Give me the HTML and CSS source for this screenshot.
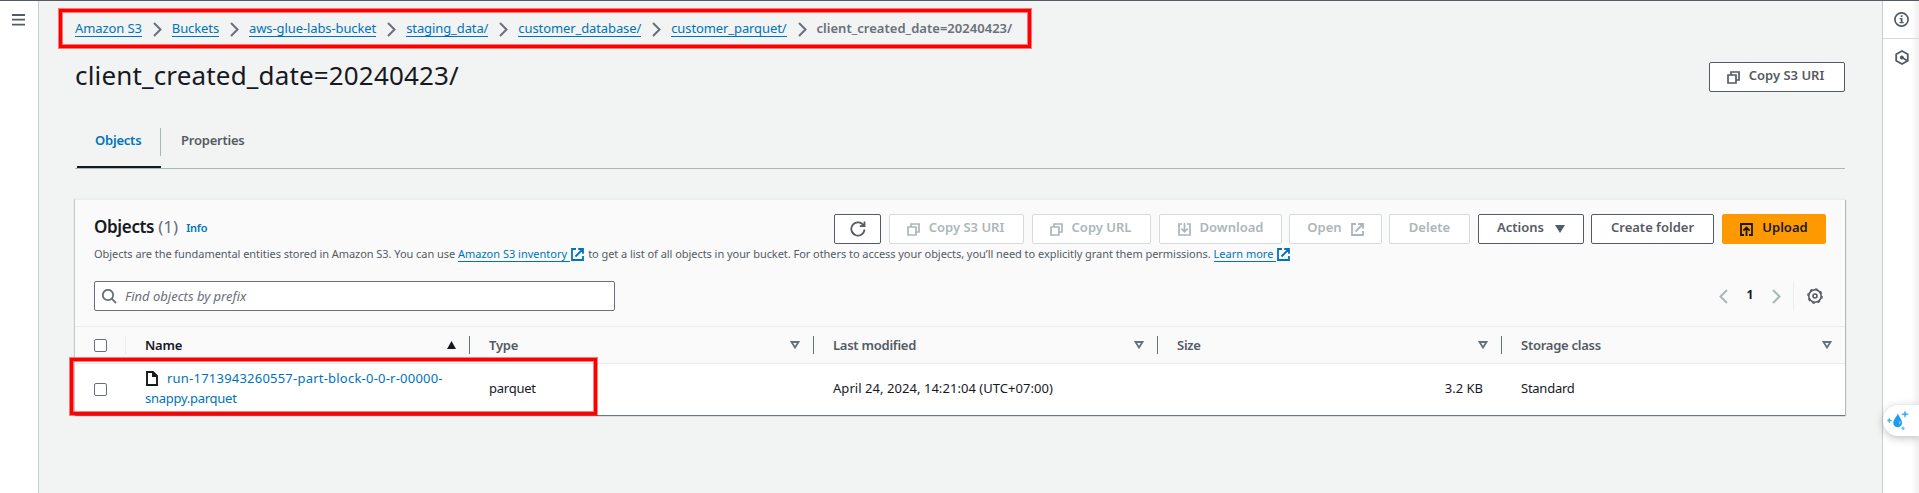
FILE: index.html
```html
<!DOCTYPE html>
<html lang="en">
<head>
<meta charset="utf-8">
<title>client_created_date=20240423/ - S3 bucket</title>
<link rel="stylesheet" href="styles.css">
</head>
<body>
<svg class="defs" width="0" height="0">
  <symbol id="copy" viewBox="0 0 13 13"><path d="M1 4h8v8H1zM4 4V1h8v8H9" fill="none" stroke="currentColor" stroke-width="1.7"/></symbol>
  <symbol id="ext" viewBox="0 0 13 13"><path d="M5 1H1v11h11V8M7.2 1H12v4.800M12 1L4.500 8.500" fill="none" stroke="currentColor" stroke-width="1.800"/></symbol>
  <symbol id="chev" viewBox="0 0 9 15"><path d="M1 1l6.500 6.500L1 14" fill="none" stroke="currentColor" stroke-width="2"/></symbol>
  <symbol id="sort" viewBox="0 0 10 8"><path d="M1.500 1h7L5 6.500z" fill="none" stroke="currentColor" stroke-width="1.800"/></symbol>
</svg>
<div class="app">
  <nav class="rail-left">
    <svg width="13" height="12" viewBox="0 0 13 12"><path d="M0 1h13M0 5.700h13M0 10.600h13" stroke="#545b64" stroke-width="1.800"/></svg>
  </nav>
  <main class="main">
    <div class="crumbs">
      <a>Amazon S3</a><svg><use href="#chev"/></svg><a>Buckets</a><svg><use href="#chev"/></svg><a>aws-glue-labs-bucket</a><svg><use href="#chev"/></svg><a>staging_data/</a><svg><use href="#chev"/></svg><a>customer_database/</a><svg><use href="#chev"/></svg><a>customer_parquet/</a><svg><use href="#chev"/></svg><b>client_created_date=20240423/</b>
      <div class="mark mark-crumbs"></div>
    </div>
    <header class="page-head">
      <h1>client_created_date=20240423/</h1>
      <button class="btn btn-uri"><svg width="13" height="13"><use href="#copy"/></svg>Copy S3 URI</button>
    </header>
    <div class="tabs">
      <div class="tab active"><span>Objects</span></div>
      <div class="tab"><span>Properties</span></div>
    </div>
    <section class="card">
      <div class="card-head">
        <div class="title-row">
          <h2>Objects <span class="count">(1)</span></h2><a class="info">Info</a>
          <div class="actions">
            <button class="btn w47"><svg width="16" height="16" viewBox="0 0 16 16"><path d="M13.800 5A6.600 6.600 0 1 0 14.500 8.500M14.500 .5V5.200H9.800" fill="none" stroke="currentColor" stroke-width="1.800"/></svg></button>
            <button class="btn off w135"><svg width="13" height="13"><use href="#copy"/></svg>Copy S3 URI</button>
            <button class="btn off w119"><svg width="13" height="13"><use href="#copy"/></svg>Copy URL</button>
            <button class="btn off w123"><svg width="13" height="13" viewBox="0 0 13 13"><path d="M4 1H1v11h11V1H9M6.500 0v9M3.300 5.500l3.200 3.200 3.200-3.200" fill="none" stroke="currentColor" stroke-width="1.700"/></svg>Download</button>
            <button class="btn off w93 tuck">Open<svg width="13" height="13"><use href="#ext"/></svg></button>
            <button class="btn off w81 tuck">Delete</button>
            <button class="btn w106 menu">Actions<svg width="10" height="8" viewBox="0 0 10 8"><path d="M0 0h10L5 8z" fill="currentColor"/></svg></button>
            <button class="btn w123 tuck">Create folder</button>
            <button class="btn primary w104"><svg width="13" height="13" viewBox="0 0 13 13"><path d="M4 12H1V1h11v11H9M6.500 13V4.500M3.300 7.700l3.200-3.200 3.200 3.200" fill="none" stroke="currentColor" stroke-width="1.800"/></svg>Upload</button>
          </div>
        </div>
        <p class="desc">Objects are the fundamental entities stored in Amazon S3. You can use <a>Amazon S3 inventory</a><svg class="ext" width="13" height="13"><use href="#ext"/></svg><span class="rest">to get a list of all objects in your bucket. For others to access your objects, you’ll need to explicitly grant them permissions.</span> <a class="more">Learn more</a><svg class="ext" width="13" height="13"><use href="#ext"/></svg></p>
        <div class="filter-row">
          <div class="search"><svg width="15" height="15" viewBox="0 0 15 15"><path d="M9.900 9.900L14 14M11.200 6A5.200 5.200 0 1 1 .8 6a5.200 5.200 0 0 1 10.400 0z" fill="none" stroke="#687078" stroke-width="1.800"/></svg><i>Find objects by prefix</i></div>
          <div class="pager">
            <svg class="prev"><use href="#chev"/></svg><b>1</b><svg><use href="#chev"/></svg>
            <div class="gear"><svg width="16" height="16" viewBox="0 0 16 16"><circle cx="8" cy="8" r="6.200" fill="none" stroke="#545b64" stroke-width="1.600"/><circle cx="8" cy="8" r="7.200" fill="none" stroke="#545b64" stroke-width="1.200" stroke-dasharray="2.827 2.827"/><circle cx="8" cy="8" r="2" fill="none" stroke="#545b64" stroke-width="1.600"/></svg></div>
          </div>
        </div>
      </div>
      <div class="row head">
        <div class="sel"><span class="box"></span></div>
        <div class="th sorted"><span>Name</span><svg width="9" height="8" viewBox="0 0 9 8"><path d="M0 8h9L4.500 0z" fill="currentColor"/></svg></div>
        <div class="th"><span>Type</span><svg width="10" height="8"><use href="#sort"/></svg></div>
        <div class="th"><span>Last modified</span><svg width="10" height="8"><use href="#sort"/></svg></div>
        <div class="th"><span>Size</span><svg width="10" height="8"><use href="#sort"/></svg></div>
        <div class="th"><span>Storage class</span><svg width="10" height="8"><use href="#sort"/></svg></div>
      </div>
      <div class="row body">
        <div class="sel"><span class="box"></span></div>
        <div class="td name"><a><svg width="12" height="15" viewBox="0 0 12 15"><path d="M1 1h6l4 4v9H1zM7 1v4h4" fill="none" stroke="#16191f" stroke-width="1.900"/></svg><span class="file">run-1713943260557-part-block-0-0-r-00000-</span><br><span class="file-end">snappy.parquet</span></a></div>
        <div class="td tight">parquet</div>
        <div class="td date">April 24, 2024, 14:21:04 (UTC+07:00)</div>
        <div class="td num">3.2 KB</div>
        <div class="td tight">Standard</div>
        <div class="mark mark-row"></div>
      </div>
    </section>
  </main>
  <aside class="rail-right">
    <div class="tool first"><svg width="15" height="15" viewBox="0 0 15 15"><circle cx="7.500" cy="7.500" r="6.600" fill="none" stroke="#545b64" stroke-width="1.700"/><path d="M6.700 3.200h1.800v1.700H6.700zM5.700 6h2.800v4h1.200v1.300H5.500V10h1.200V7.300h-1z" fill="#545b64"/></svg></div>
    <div class="tool"><svg width="14" height="15" viewBox="0 0 14 15"><path d="M7 1l5.800 3.200v6.600L7 14l-5.800-3.200V4.200z" fill="none" stroke="#545b64" stroke-width="1.800"/><circle cx="6.800" cy="7.500" r="2" fill="#545b64"/><path d="M7 7.500l5 3" stroke="#545b64" stroke-width="1.700"/></svg></div>
  </aside>
  <div class="helper"><svg width="22" height="20" viewBox="0 0 22 20"><path d="M10.800 2.500C12.500 6.500 15 8.500 15 12a4.300 4.300 0 0 1-8.700 0c0-3.500 3-5.500 4.500-9.500z" fill="#1a9cf0"/><path d="M12.800 9.800c1.200 1.500.8 3-.6 3.600z" fill="#bfe4fb"/><path d="M18 0l.9 2.300 2.600.9-2.600.9L18 6.500l-.9-2.400-2.600-.9 2.600-.9zM2.300 7l.8 1.700 1.900.7-1.900.7-.8 1.900-.8-1.900L0 9.400l1.500-.7zM16 15.500l.5 1.200 1.200.5-1.200.5L16 19l-.5-1.300-1.200-.5 1.200-.5z" fill="#3aaef5" stroke="#3aaef5" stroke-width=".4"/></svg></div>
</div>
</body>
</html>
```
FILE: styles.css
```css
* { box-sizing: border-box; }
body { margin: 0; font: 13px/20px "Noto Sans", sans-serif; color: #16191f; overflow: hidden; }
.defs { position: absolute; }
h1, h2, p { margin: 0; font-weight: 400; }
a { color: #0073bb; }
svg { display: block; flex: none; }

.app { display: flex; position: relative; height: 493px; background: #f2f3f3; border-top: 1px solid #545b64; }
.rail-left { width: 39px; background: #fff; border-right: 1px solid #c6cfcf; padding: 13px 0 0 12px; }
.main { flex: 1; padding: 0 37px 0 36px; }
.rail-right { width: 37px; border-left: 1px solid #c6cfcf; background: linear-gradient(90deg, #fff 28px, #f0f0f0); }
.tool { display: flex; justify-content: center; padding: 11px 0 0 1px; height: 38px; }
.tool.first { border-bottom: 1px solid #d5dbdb; }
.helper { position: absolute; right: 0; top: 404px; width: 36px; height: 31px; padding: 6px 0 0 4px; border-radius: 16px 0 0 16px; background: #fff; box-shadow: 0 2px 8px rgba(0, 0, 0, .25); }

/* Breadcrumbs */
.crumbs { display: flex; position: relative; height: 48px; padding-top: 18px; line-height: 18px; }
.crumbs a { height: 18px; border-bottom: 1px solid #0073bb; letter-spacing: -.1px; }
.crumbs svg { width: 9px; height: 15px; margin: 3px 10px 0 11px; color: #687078; }
.crumbs b { font-weight: 600; color: #687078; letter-spacing: .03px; }

/* Highlight frames */
.mark { position: absolute; border: 3px solid #f00; box-shadow: 0 0 0 1px rgba(255, 0, 0, .5), inset 0 0 0 1px rgba(255, 0, 0, .5); pointer-events: none; }
.mark-crumbs { left: -16px; top: 8px; width: 972px; height: 39px; }
.mark-row { left: -5px; top: -6px; width: 527px; height: 57px; }

.page-head { display: flex; justify-content: space-between; padding-top: 13px; height: 79px; }
h1 { font-size: 26px; line-height: 32px; margin-top: -3px; letter-spacing: .16px; }

.btn { display: flex; align-items: center; justify-content: center; height: 30px; padding: 0 0 4px; font: 600 13px/20px "Noto Sans", sans-serif; color: #545b64; background: #fff; border: 1px solid #545b64; border-radius: 2px; gap: 9px; }
.btn svg { position: relative; top: 2px; }
.btn-uri { width: 136px; padding-right: 3px; }
.off { color: #aab7b8; border-color: #d5dbdb; }
.primary { color: #16191f; background: #f90; border-color: #f90; }
.menu { gap: 11px; }
.tuck { margin-left: -1px; }
.w47 { width: 47px; }
.w81 { width: 81px; }
.w93 { width: 93px; }
.w104 { width: 104px; }
.w106 { width: 106px; }
.w119 { width: 119px; padding-right: 2px; }
.w123 { width: 123px; }
.w135 { width: 135px; padding-right: 2px; }

/* Tabs */
.tabs { display: flex; height: 41px; border-bottom: 1px solid #aab7b8; padding-left: 2px; font-weight: 600; color: #545b64; letter-spacing: -.22px; }
.tab span { display: block; height: 28px; padding: 2px 20px 0; }
.tab.active { color: #0073bb; border-bottom: 2px solid #16191f; width: 84px; }
.tab.active span { padding: 2px 0 0 18px; border-right: 1px solid #aab7b8; }

/* Objects card */
.card { margin-top: 30px; background: #fff; border-top: 1px solid #eaeded; box-shadow: 0 1px 1px rgba(0, 28, 36, .45), 1px 1px 1px rgba(0, 28, 36, .2), -1px 0 1px rgba(0, 28, 36, .12); }
.card-head { background: #fafafa; padding: 14px 19px 15px 19px; height: 126px; }
.title-row { display: flex; height: 30px; }
h2 { font-size: 17px; font-weight: 600; line-height: 26px; letter-spacing: -.35px; }
.count { font-weight: 400; color: #687078; letter-spacing: 0; }
.info { font-size: 11px; font-weight: 600; line-height: 28px; margin-left: 8px; letter-spacing: -.2px; }
.actions { display: flex; gap: 8px; margin-left: auto; }
.desc { display: flex; align-items: flex-start; height: 19px; padding-top: 1px; font-size: 11px; line-height: 18px; color: #545b64; letter-spacing: -.05px; white-space: pre; }
.desc a { height: 17px; padding-right: 3px; border-bottom: 1px solid #0073bb; letter-spacing: 0; }
.desc .more { margin-left: 3px; }
.ext { color: #0073bb; margin: 3px 4px 0 1px; }

.filter-row { display: flex; justify-content: space-between; margin-top: 18px; }
.search { display: flex; align-items: center; width: 521px; height: 30px; gap: 8px; padding: 0 7px; border: 1px solid #687078; border-radius: 2px; background: #fff; color: #687078; }
.pager { display: flex; align-items: center; color: #aab7b8; }
.pager > svg { width: 9px; height: 15px; }
.pager .prev { transform: scaleX(-1); }
.pager b { width: 44px; text-align: center; font-weight: 700; font-size: 12px; color: #16191f; padding-bottom: 3px; }
.gear { display: flex; align-items: center; height: 30px; margin-left: 12px; padding: 0 3px 0 13px; border-left: 1px solid #eaeded; }

/* Table */
.row { display: grid; grid-template-columns: 51px repeat(4, 344px) 343px; align-items: center; }
.head { height: 38px; background: #fafafa; border-top: 1px solid #eaeded; border-bottom: 1px solid #eaeded; }
.body { position: relative; height: 51px; }
.sel { padding-left: 19px; }
.box { display: block; width: 13px; height: 13px; border: 1px solid #687078; border-radius: 2px; background: #fff; }
.head .sel { display: flex; align-items: center; height: 18px; border-right: 1px solid #eaeded; }
.th { display: flex; align-items: center; justify-content: space-between; height: 18px; padding: 0 13px 0 19px; border-right: 1px solid #687078; font-weight: 600; color: #545b64; letter-spacing: -.25px; }
.th:last-child { border-right: 0; }
.th svg { color: #687078; }
.th.sorted, .th.sorted svg { color: #16191f; }
.td { padding: 0 19px 0 19px; margin-top: -3px; }
.td.name svg { display: inline-block; margin: 0 9px 0 1px; vertical-align: -3px; }
.file { letter-spacing: .22px; }
.file-end { letter-spacing: -.27px; }
.tight { letter-spacing: -.25px; }
.date { letter-spacing: .05px; }
.num { text-align: right; }
```
